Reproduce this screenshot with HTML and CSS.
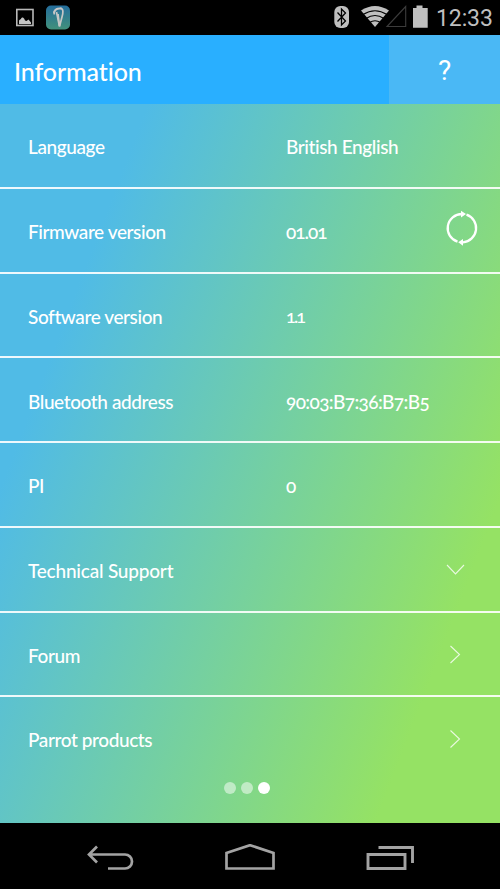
FILE: index.html
```html
<!DOCTYPE html>
<html lang="en">
<head>
    <meta charset="UTF-8">
    <meta name="viewport" content="width=device-width, initial-scale=1.0">
    <title>Information</title>
    <link rel="stylesheet" href="styles.css">
</head>
<body>
    <div class="status-bar">
        <svg class="status-left" width="72" height="34" viewBox="0 0 72 34">
            <defs>
                <linearGradient id="app" x1="0" y1="0" x2="0" y2="1">
                    <stop offset="0" stop-color="#246d9c"/>
                    <stop offset="1" stop-color="#42917b"/>
                </linearGradient>
            </defs>
            <rect x="16.8" y="9.5" width="16.2" height="16" fill="none" stroke="#b8b8b8" stroke-width="1.6"/>
            <path d="M19 24v-3.500q1-1.500 2-1.500 0-2 2-1.500 1.500 1 2 3l1.500.500 2-1.500 2.500 3v1.500z" fill="#c4c4c4"/>
            <rect x="46" y="5.500" width="24" height="24" rx="5" fill="url(#app)"/>
            <path d="M54.500 14.500C52.500 10 57 8.500 60 8.500c4-.5 3 5 2 8.500l-2.500 9.500L56.500 12" fill="none" stroke="#c6c6c6" stroke-width="1.700"/>
            <path d="M54 13c1-4 4-5 7.500-4.500M58 14l1.500 12" fill="none" stroke="#c6c6c6" stroke-width="1.800"/>
        </svg>
        <div class="status-right">
            <svg width="100" height="34" viewBox="0 0 100 34">
                <rect x="4.300" y="6" width="14.700" height="22" rx="6" fill="#bfbfbf"/>
                <path d="M7.500 12.500l8 8.500-4 4v-16l4 4-8 8.500" fill="none" stroke="#000" stroke-width="1.300"/>
                <path d="M45 27L31 10.500q14-9 28 0z" fill="#bfbfbf"/>
                <path d="M33 14.500q12-7.500 24 0M36 18.500q9-6 18 0M39.500 22.500q5.500-3.500 11 0" fill="none" stroke="#000" stroke-width="1.100"/>
                <path d="M57 26.500h18.700V6.500z" fill="none" stroke="#3c3c3c" stroke-width="1.100"/>
                <path d="M83 8h3.500V5.500h6V8H97.700v19.700H83z" fill="#bfbfbf"/>
            </svg>
            <span class="clock">12:33</span>
        </div>
    </div>

    <div class="header">
        <h1 class="title">Information</h1>
        <div class="help">?</div>
    </div>

    <div class="content">
        <div class="row">
            <span class="label">Language</span>
            <span class="value">British English</span>
        </div>
        <div class="row">
            <span class="label">Firmware version</span>
            <span class="value number">01.01</span>
            <svg class="refresh" width="34" height="36" viewBox="0 0 34 36">
                <path d="M12.500 31.700A14.200 14.200 0 0 1 17 4M21.500 4.700A14.200 14.200 0 0 1 18 32.300" fill="none" stroke="#fff" stroke-width="2.300"/>
                <path d="M16 .8l5 3.300-5 3.300zM18 28.900v6.800L13.200 32.300z" fill="#fff"/>
            </svg>
        </div>
        <div class="row">
            <span class="label">Software version</span>
            <span class="value short">1.1</span>
        </div>
        <div class="row">
            <span class="label">Bluetooth address</span>
            <span class="value address">90:03:B7:36:B7:B5</span>
        </div>
        <div class="row">
            <span class="label">PI</span>
            <span class="value">0</span>
        </div>
        <div class="row">
            <span class="label wide">Technical Support</span>
            <svg class="arrow" width="20" height="20" viewBox="0 0 20 20"><path d="M1 6l8.500 9L18 6"/></svg>
        </div>
        <div class="row">
            <span class="label">Forum</span>
            <svg class="arrow" width="20" height="20" viewBox="0 0 20 20"><path d="M4.500 2l9 8.500-9 8.500"/></svg>
        </div>
        <div class="row">
            <span class="label">Parrot products</span>
            <svg class="arrow" width="20" height="20" viewBox="0 0 20 20"><path d="M4.500 2.500l9 8.500-9 8.500"/></svg>
        </div>
        <div class="dots">
            <span class="dot"></span>
            <span class="dot"></span>
            <span class="dot active"></span>
        </div>
    </div>

    <div class="nav-bar">
        <svg width="48" height="28" viewBox="0 0 48 28">
            <path d="M3 10.500h36a7 7 0 0 1 0 14H22M11 2.500l-8 8 8 8" fill="none" stroke="#a3a3a3" stroke-width="2.700"/>
        </svg>
        <svg width="52" height="28" viewBox="0 0 52 28">
            <path d="M2.500 24.500V9L26 1.200 49.500 9v15.500z" fill="none" stroke="#a3a3a3" stroke-width="2.700"/>
        </svg>
        <svg width="50" height="28" viewBox="0 0 50 28">
            <path d="M2 10.500h37v14H2zM12.500 3.500H46.500v15.500" fill="none" stroke="#a3a3a3" stroke-width="2.900"/>
        </svg>
    </div>
</body>
</html>
```

FILE: styles.css
```css
* {
    box-sizing: border-box;
}

body {
    margin: 0;
    height: 889px;
    display: flex;
    flex-direction: column;
    background-color: #000;
    color: #fff;
    font-family: Lato, "Open Sans", sans-serif;
    font-variant-ligatures: none;
    overflow: hidden;
}

.status-bar {
    height: 35px;
    display: flex;
    justify-content: space-between;
}

.status-right {
    display: flex;
    width: 170px;
}

.clock {
    margin-left: 6px;
    line-height: 37px;
    font-family: Roboto, sans-serif;
    font-size: 23px;
    letter-spacing: -0.1px;
    color: #bfbfbf;
}

.header {
    height: 69px;
    display: flex;
    background-color: #29afff;
}

.title {
    flex: 1;
    margin: 0;
    padding-left: 14px;
    line-height: 73px;
    font-size: 25px;
    font-weight: 500;
    letter-spacing: -0.1px;
}

.help {
    width: 111px;
    text-align: center;
    line-height: 72px;
    font-family: Roboto, sans-serif;
    font-size: 28px;
    background-color: #4ab8f5;
}

.content {
    height: 718.500px;
    background: linear-gradient(111deg, #50bbe6 19%, #95e264 84%);
}

.row {
    height: 84.750px;
    padding: 0 34px 0 28px;
    display: flex;
    align-items: center;
    border-bottom: 2px solid rgba(255, 255, 255, 0.9);
    font-size: 19px;
    font-weight: 500;
    letter-spacing: -0.4px;
}

.row:nth-child(8) {
    height: 82px;
    border-bottom: none;
}

.label {
    width: 258px;
    padding-top: 3px;
}

.label.wide {
    letter-spacing: -0.2px;
}

.value {
    padding-top: 3px;
    font-variant-numeric: oldstyle-nums;
}

.value.number {
    letter-spacing: -1px;
}

.value.short {
    font-size: 18px;
    letter-spacing: -1.800px;
}

.value.address {
    letter-spacing: -0.600px;
}

.refresh {
    margin-left: auto;
    margin-right: -13px;
    margin-top: -4px;
}

.arrow {
    margin-left: auto;
    fill: none;
    stroke: #fff;
    stroke-opacity: 0.8;
    stroke-width: 1.100;
}

.dots {
    display: flex;
    justify-content: center;
    gap: 5px;
    margin-top: 3px;
    margin-right: 7px;
}

.dot {
    width: 12px;
    height: 12px;
    border-radius: 50%;
    background-color: rgba(255, 255, 255, 0.5);
}

.dot.active {
    background-color: #fff;
}

.nav-bar {
    flex: 1;
    display: flex;
    justify-content: center;
    align-items: center;
    gap: 90px;
    padding-left: 2px;
    padding-top: 4px;
}
```
